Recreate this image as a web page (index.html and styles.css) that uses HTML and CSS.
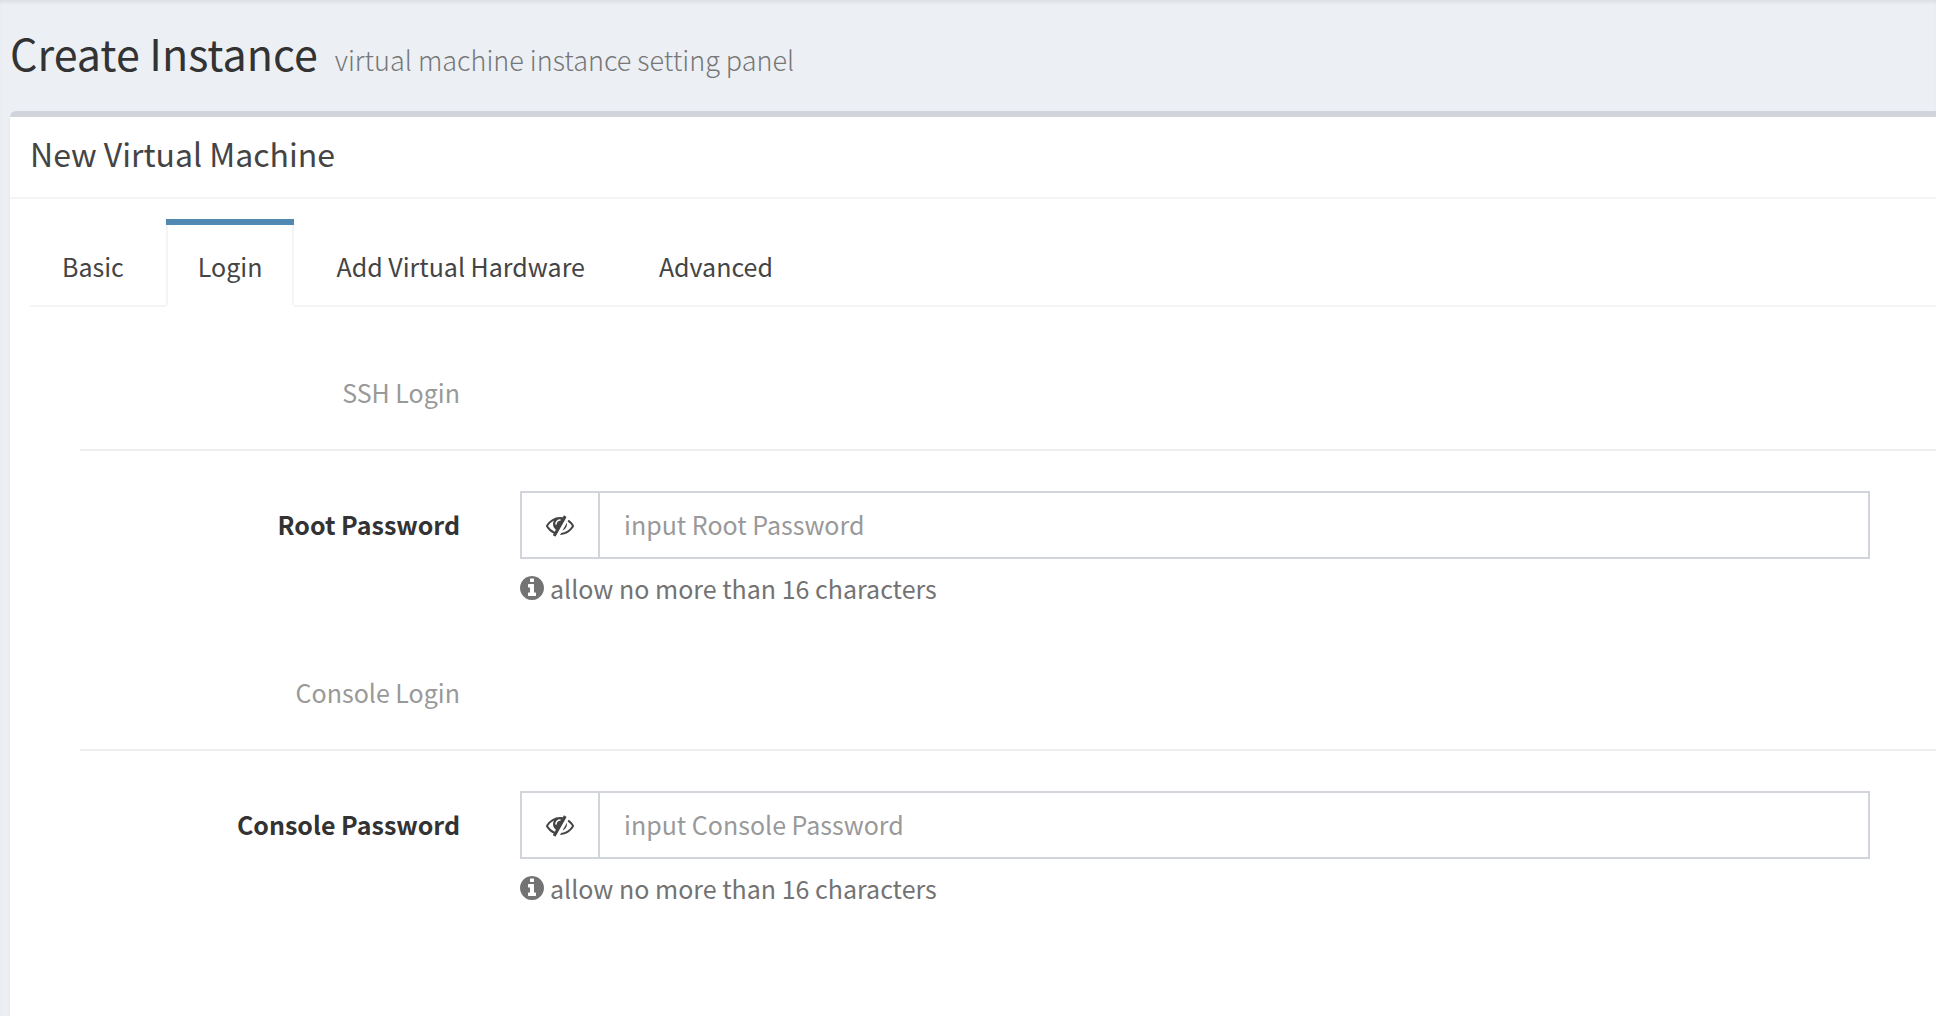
FILE: index.html
```html
<!DOCTYPE html>
<html lang="en">
<head>
<meta charset="utf-8">
<meta name="viewport" content="width=device-width, initial-scale=1">
<title>Create Instance</title>
<link rel="stylesheet" href="styles.css">
</head>
<body>
<svg class="sprite" aria-hidden="true">
  <symbol id="eye-slash" viewBox="0 0 1792 1792"><path d="M555 1335l78-141q-87-63-136-159t-49-203q0-121 61-225-229 117-381 353 167 258 427 375zm389-759q0-20-14-34t-34-14q-125 0-214.500 89.500t-89.500 214.500q0 20 14 34t34 14 34-14 14-34q0-86 61-147t147-61q20 0 34-14t14-34zm363-191q0 7-1 9-106 189-316 567t-315 566l-49 89q-10 16-28 16-12 0-134-70-16-10-16-28 0-12 44-87-143-65-263.500-173t-208.500-245q-20-31-20-69t20-69q153-235 380-371t496-136q89 0 180 17l54-97q10-16 28-16 5 0 18 6t31 15.500 33 18.500 31.500 18.500 19.500 11.500q16 10 16 27zm37 447q0 139-79 253.500t-209 164.500l280-502q8 45 8 84zm448 128q0 35-20 69-39 64-109 145-150 172-347.500 267t-419.500 95l74-132q212-18 392.500-137t301.500-307q-115-179-282-294l63-112q95 64 182.500 153t144.500 184q20 34 20 69z"/></symbol>
  <symbol id="info-circle" viewBox="128 128 1536 1536"><path d="M1152 1376v-160q0-14-9-23t-23-9h-96v-512q0-14-9-23t-23-9h-320q-14 0-23 9t-9 23v160q0 14 9 23t23 9h96v320h-96q-14 0-23 9t-9 23v160q0 14 9 23t23 9h448q14 0 23-9t9-23zm-128-896v-160q0-14-9-23t-23-9h-192q-14 0-23 9t-9 23v160q0 14 9 23t23 9h192q14 0 23-9t9-23zm640 416q0 209-103 385.500t-279.500 279.500-385.500 103-385.500-103-279.500-279.500-103-385.500 103-385.500 279.500-279.500 385.500-103 385.500 103 279.500 279.500 103 385.500z"/></symbol>
</svg>

<header class="content-header">
  <h1>Create Instance</h1>
  <small>virtual machine instance setting panel</small>
</header>

<main class="box">
  <h2 class="box-title">New Virtual Machine</h2>
  <div class="box-body">
    <nav class="tabs">
      <a class="tab" href="#basic">Basic</a>
      <a class="tab active" href="#login" aria-current="page">Login</a>
      <a class="tab" href="#hardware">Add Virtual Hardware</a>
      <a class="tab" href="#advanced">Advanced</a>
    </nav>

    <form class="login-form" id="login">
      <section class="group">
        <h3 class="group-title">SSH Login</h3>
        <div class="field">
          <label for="root-password">Root Password</label>
          <div class="control">
            <div class="input-group">
              <button type="button" class="addon" aria-label="Show root password"><svg class="icon-eye"><use href="#eye-slash"/></svg></button>
              <input type="password" id="root-password" placeholder="input Root Password" aria-describedby="root-help">
            </div>
            <p class="help" id="root-help"><svg class="icon-info"><use href="#info-circle"/></svg><span>allow no more than 16 characters</span></p>
          </div>
        </div>
      </section>

      <section class="group">
        <h3 class="group-title">Console Login</h3>
        <div class="field">
          <label for="console-password">Console Password</label>
          <div class="control">
            <div class="input-group">
              <button type="button" class="addon" aria-label="Show console password"><svg class="icon-eye"><use href="#eye-slash"/></svg></button>
              <input type="password" id="console-password" placeholder="input Console Password" aria-describedby="console-help">
            </div>
            <p class="help" id="console-help"><svg class="icon-info"><use href="#info-circle"/></svg><span>allow no more than 16 characters</span></p>
          </div>
        </div>
      </section>
    </form>
  </div>
</main>
</body>
</html>
```
FILE: styles.css
```css
* {
  box-sizing: border-box;
}

body {
  margin: 0;
  min-height: 100vh;
  display: flex;
  flex-direction: column;
  background: #ecf0f5;
  box-shadow: inset 0 4px 4px -2px rgba(0, 0, 0, 0.08);
  color: #333;
  font-family: "Noto Sans CJK SC", "Noto Sans", sans-serif;
  font-size: 25px;
  line-height: 40px;
}

h1, h2, h3, p {
  margin: 0;
  font-weight: 400;
}

svg {
  fill: currentColor;
}

.sprite {
  position: absolute;
  width: 0;
  height: 0;
}

.content-header {
  display: flex;
  align-items: baseline;
  gap: 17px;
  padding: 26px 10px 31px;
}

.content-header h1 {
  font-size: 43px;
  line-height: 52px;
}

.content-header small {
  font-size: 27px;
  font-weight: 300;
  color: #777;
}

.box {
  flex: 1;
  margin-left: 10px;
  background: #fff;
  border-top: 6px solid #d2d4db;
  border-top-left-radius: 6px;
  box-shadow: 0 2px 2px rgba(0, 0, 0, 0.1);
}

.box-title {
  padding: 16px 20px 24px;
  border-bottom: 2px solid #f4f4f4;
  color: #444;
  font-size: 32px;
}

.box-body {
  padding: 20px 0 20px 20px;
}

.tabs {
  display: flex;
  gap: 10px;
  border-bottom: 2px solid #f4f4f4;
}

.tab {
  margin-bottom: -2px;
  padding: 27px 32px 19px;
  border-bottom: 2px solid transparent;
  color: #444;
  text-decoration: none;
}

.tab.active {
  border-bottom-color: #fff;
  background: #fff;
  box-shadow: inset 0 6px #508ab2, inset 2px 0 #f4f4f4, inset -2px 0 #f4f4f4;
}

.login-form {
  padding: 1px 0 0 50px;
}

.group {
  padding-top: 64px;
}

/* Section titles share the right edge of the field labels. */
.group-title,
.field {
  display: grid;
  grid-template-columns: 380px 1fr;
  column-gap: 60px;
  text-align: right;
}

.group-title {
  padding-bottom: 37px;
  border-bottom: 2px solid #eee;
  color: #999;
  font-size: 25px;
}

.field {
  padding: 40px 66px 0 0;
}

.field label {
  padding-top: 13px;
  font-weight: 700;
}

.control {
  text-align: left;
}

.input-group {
  display: flex;
  height: 68px;
  border: 2px solid #d2d4db;
}

.addon {
  display: flex;
  align-items: center;
  justify-content: center;
  width: 78px;
  padding: 0;
  border: 0;
  border-right: 2px solid #d2d4db;
  background: #fff;
  color: #444;
}

.icon-eye {
  width: 28px;
  height: 28px;
}

.input-group input {
  flex: 1;
  min-width: 0;
  padding: 0 24px 2px;
  border: 0;
  background: #fff;
  color: #555;
  font: inherit;
}

.input-group input::placeholder {
  color: #999;
  opacity: 1;
}

.help {
  display: flex;
  align-items: center;
  gap: 6px;
  padding-top: 9px;
  color: #737373;
}

.icon-info {
  width: 24px;
  height: 24px;
}
```
